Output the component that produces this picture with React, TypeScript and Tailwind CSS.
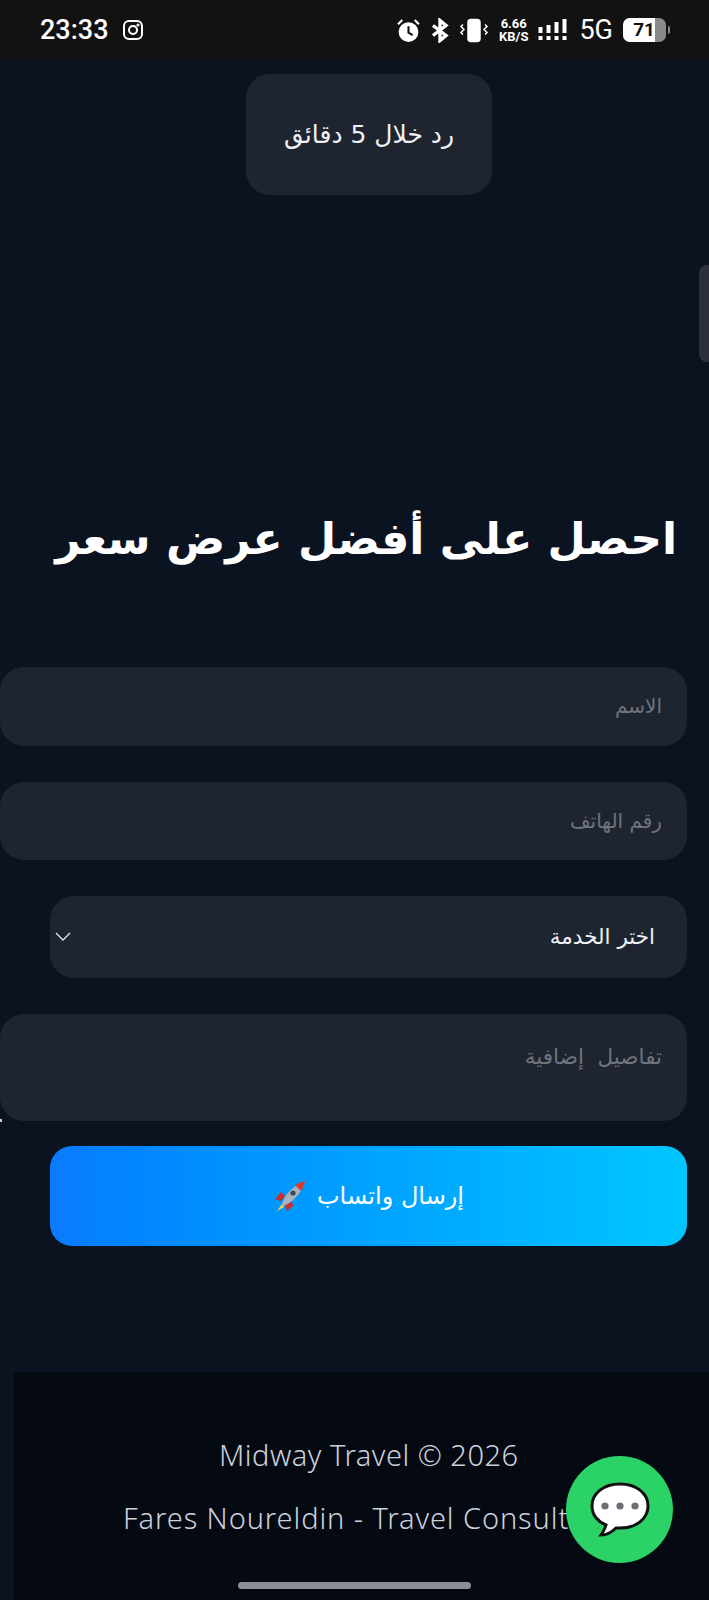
const arabic = "font-['DejaVu_Sans','Noto_Sans',sans-serif]"

const StatusBar = () => (
	<div className="h-[60px] bg-[#121212] flex items-center justify-between pl-[40px] pr-[39px] text-white">
		<div className="flex items-center gap-[14px]">
			<span className="text-[27px] font-medium font-['Roboto',sans-serif]">23:33</span>
			<svg width="20" height="20" viewBox="0 0 20 20" fill="none" stroke="white" strokeWidth="2">
				<rect x="1" y="1" width="18" height="18" rx="5" />
				<circle cx="10" cy="10" r="4" />
				<circle cx="15" cy="5" r="0.6" fill="white" />
			</svg>
		</div>
		<div className="flex items-center gap-[10px]">
			<svg width="25" height="25" viewBox="0 0 24 24" fill="white">
				<circle cx="12" cy="13.5" r="9.5" />
				<path d="M12 8v6l4 2.5" stroke="#121212" strokeWidth="2" fill="none" />
				<path d="M2 6l4-4M22 6l-4-4" stroke="white" strokeWidth="2" />
			</svg>
			<svg width="18" height="25" viewBox="0 0 18 24" fill="none" stroke="white" strokeWidth="3.4">
				<path d="M2 7l13 10-6 5V2l6 5L2 17" />
			</svg>
			<svg width="30" height="25" viewBox="0 0 30 24" fill="none" stroke="white" strokeWidth="1.5">
				<rect x="9" y="1" width="12" height="22" rx="3" fill="white" />
				<path d="M4 6l-2 2 3 3-3 3 2 2M26 6l2 2-3 3 3 3-2 2" />
			</svg>
			<div className="flex flex-col items-center text-[13px] leading-[13px] font-bold font-['Roboto',sans-serif]">
				<span>6.66</span>
				<span>KB/S</span>
			</div>
			<svg width="31" height="24" viewBox="0 0 30 24" fill="white">
				<rect x="0" y="9" width="4" height="6" />
				<rect x="0" y="18" width="4" height="4" />
				<rect x="8" y="7" width="4" height="8" />
				<rect x="8" y="18" width="4" height="4" />
				<rect x="16" y="4" width="4" height="11" />
				<rect x="16" y="18" width="4" height="4" />
				<rect x="24" y="1" width="4" height="14" />
				<rect x="24" y="18" width="4" height="4" />
			</svg>
			<span className="text-[27px] font-['Roboto',sans-serif]">5G</span>
			<div className="flex items-center gap-[2px]">
				<div className="w-[43px] h-[24px] rounded-[7px] overflow-hidden flex bg-[#8a8a8a]">
					<div className="w-[32px] bg-white text-[#121212] text-[19px] font-bold leading-[24px] text-right font-['Roboto',sans-serif]">
						71
					</div>
				</div>
				<div className="w-[2px] h-[8px] bg-[#8a8a8a] rounded-r-sm" />
			</div>
		</div>
	</div>
)

const Rocket = () => (
	<svg width="34" height="34" viewBox="0 0 34 34">
		<path d="M8 13l-6 7 6 2 4-5z" fill="#c62f2a" />
		<path d="M21 26l-7 6-2-6 5-4z" fill="#c62f2a" />
		<path d="M9 25c2-8 9-17 23-23-4 14-13 21-21 25z" fill="#a9b2bd" />
		<path d="M22 6c3-2 6-3 10-4-1 4-2 7-4 10z" fill="#d93a2b" />
		<circle cx="20" cy="14" r="2.6" fill="#3d4a57" />
		<path d="M9 25l-5 7 7-4z" fill="#f6d24a" />
	</svg>
)

const Field = ({ label, tall }: { label: string; tall?: boolean }) => (
	<div
		className={`w-[687px] bg-[#1f2530] rounded-[24px] pr-[25px] pl-[26px] text-[#6f747d] whitespace-pre ${arabic} ${tall ? "h-[107px] pt-[27px] text-[21.5px]" : "h-[78.5px] flex items-center text-[20px]"}`}
	>
		{label}
	</div>
)

export default function App() {
	return (
		<div dir="rtl" className="relative w-[709px] h-[1600px] overflow-hidden bg-[#0b1220]">
			<div dir="ltr">
				<StatusBar />
			</div>

			<div className="flex mt-[14px] pr-[217px]">
				<div
					className={`w-[246px] h-[121px] rounded-[24px] bg-[#1f2530] flex items-center justify-center text-[#eef0f3] text-[25px] ${arabic}`}
				>
					رد خلال 5 دقائق
				</div>
			</div>

			<h1 className={`mt-[313px] pr-[32px] text-white text-[44px] leading-[62px] font-bold whitespace-nowrap ${arabic}`}>
				احصل على أفضل عرض سعر
			</h1>

			<div className="mt-[97px] pr-[22px] flex flex-col items-start gap-[36px]">
				<Field label="الاسم" />
				<Field label="رقم الهاتف" />
				<div
					className={`w-[637px] h-[82px] rounded-[24px] bg-[#1f2530] flex items-center justify-between pr-[32px] pl-[5px] text-[#eef0f3] text-[21.5px] ${arabic}`}
				>
					<span>اختر الخدمة</span>
					<svg width="16" height="10" viewBox="0 0 16 10" fill="none" stroke="#e5e7eb" strokeWidth="1.3">
						<path d="M1 1l7 7 7-7" />
					</svg>
				</div>
				<Field label="تفاصيل  إضافية" tall />
			</div>

			<div className="pr-[22px] mt-[25px]">
				<div
					className={`w-[637px] h-[100px] rounded-[22px] bg-linear-to-r from-[#0b7bff] to-[#00c6ff] flex items-center justify-center gap-[10px] text-white text-[24px] ${arabic}`}
				>
					<span>إرسال واتساب</span>
					<Rocket />
				</div>
			</div>

			<div
				dir="ltr"
				className="mt-[126px] ml-[14px] w-[695px] h-[228px] bg-[#050912] pt-[64px] text-[#cbd0dc] text-[29px] font-['Noto_Sans',sans-serif] font-light whitespace-nowrap"
			>
				<p className="pl-[205px] leading-[38px] tracking-[0.5px]">Midway Travel © 2026</p>
				<p className="pl-[109px] mt-[25px] leading-[38px] tracking-[0.9px]">Fares Noureldin - Travel Consultant</p>
			</div>

			{/* floating stuff over the page */}
			<div className="absolute left-[566px] top-[1456px] w-[107px] h-[107px] rounded-full bg-[#2bd366] flex items-center justify-center">
				<svg width="62" height="58" viewBox="0 0 62 58">
					<path
						d="M31 3C15 3 3 12 3 25c0 9 6 16 14 19-1 4-3 7-5 10 6 0 11-3 15-7 1 0 3 0 4 0 16 0 28-9 28-22S47 3 31 3z"
						fill="white"
						stroke="#111"
						strokeWidth="3"
					/>
					<circle cx="16" cy="25" r="3.6" fill="#6b6f76" />
					<circle cx="31" cy="25" r="3.6" fill="#6b6f76" />
					<circle cx="46" cy="25" r="3.6" fill="#6b6f76" />
				</svg>
			</div>
			<div className="absolute right-0 top-[265px] w-[10px] h-[97px] rounded-l-[8px] bg-[#2c303a]" />
			<div className="absolute left-0 top-[1119px] w-[2px] h-[3px] bg-[#c8ccd4]" />
			<div className="absolute left-[238px] top-[1582px] w-[233px] h-[7px] rounded-full bg-[#8b8d98]" />
		</div>
	)
}
